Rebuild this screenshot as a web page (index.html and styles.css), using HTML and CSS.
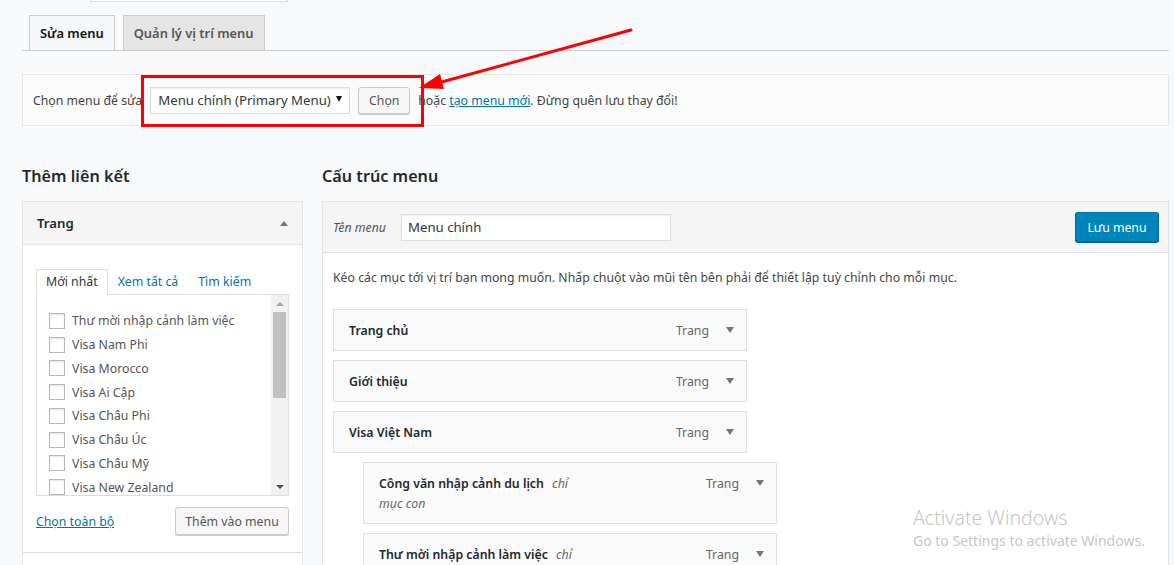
FILE: index.html
```html
<!DOCTYPE html>
<html lang="vi">
<head>
<meta charset="utf-8">
<title>Menu</title>
<link rel="stylesheet" href="styles.css">
</head>
<body>
<div class="wrap">
  <div class="top-field"></div>
  <nav class="nav-tabs">
    <a class="nav-tab active">Sửa menu</a>
    <a class="nav-tab">Quản lý vị trí menu</a>
  </nav>
  <div class="manage-menus">
    <span class="manage-label">Chọn menu để sửa</span>
    <div class="select"><span class="select-text">Menu chính (Primary Menu)</span><span class="caret"></span></div>
    <button class="btn btn-choose">Chọn</button>
    <span class="manage-after">hoặc <a class="link">tạo menu mới</a>. Đừng quên lưu thay đổi!</span>
  </div>
  <div class="columns">
    <section class="col-left">
      <h2 class="col-title">Thêm liên kết</h2>
      <div class="accordion">
        <div class="acc-head"><span>Trang</span><span class="tri-up"></span></div>
        <div class="acc-body">
          <div class="mini-tabs">
            <span class="mini-tab active">Mới nhất</span>
            <span class="mini-tab">Xem tất cả</span>
            <span class="mini-tab">Tìm kiếm</span>
          </div>
          <div class="list-box">
            <ul class="checklist">
              <li><span class="cb"></span>Thư mời nhập cảnh làm việc</li>
              <li><span class="cb"></span>Visa Nam Phi</li>
              <li><span class="cb"></span>Visa Morocco</li>
              <li><span class="cb"></span>Visa Ai Cập</li>
              <li><span class="cb"></span>Visa Châu Phi</li>
              <li><span class="cb"></span>Visa Châu Úc</li>
              <li><span class="cb"></span>Visa Châu Mỹ</li>
              <li><span class="cb"></span>Visa New Zealand</li>
            </ul>
            <div class="scrollbar">
              <span class="sb-btn"><span class="sb-up"></span></span>
              <span class="sb-thumb"></span>
              <span class="sb-btn sb-bottom"><span class="sb-down"></span></span>
            </div>
          </div>
          <div class="acc-actions">
            <a class="link">Chọn toàn bộ</a>
            <button class="btn btn-add">Thêm vào menu</button>
          </div>
        </div>
        <div class="acc-next"></div>
      </div>
    </section>
    <section class="col-right">
      <h2 class="col-title">Cấu trúc menu</h2>
      <div class="menu-edit">
        <div class="me-head">
          <span class="name-label">Tên menu</span>
          <div class="name-input">Menu chính</div>
          <button class="btn-primary">Lưu menu</button>
        </div>
        <div class="me-body">
          <p class="desc">Kéo các mục tới vị trí bạn mong muốn. Nhấp chuột vào mũi tên bên phải để thiết lập tuỳ chỉnh cho mỗi mục.</p>
          <ul class="menu-items">
            <li class="item"><span class="item-title">Trang chủ</span><span class="item-type">Trang</span><span class="item-arrow"><span class="tri-down"></span></span></li>
            <li class="item"><span class="item-title">Giới thiệu</span><span class="item-type">Trang</span><span class="item-arrow"><span class="tri-down"></span></span></li>
            <li class="item"><span class="item-title">Visa Việt Nam</span><span class="item-type">Trang</span><span class="item-arrow"><span class="tri-down"></span></span></li>
            <li class="item sub"><span class="item-title">Công văn nhập cảnh du lịch <em class="sub-note">chỉ</em><br><em class="sub-note first">mục con</em></span><span class="item-type">Trang</span><span class="item-arrow"><span class="tri-down"></span></span></li>
            <li class="item sub last"><span class="item-title">Thư mời nhập cảnh làm việc <em class="sub-note">chỉ</em></span><span class="item-type">Trang</span><span class="item-arrow"><span class="tri-down"></span></span></li>
          </ul>
        </div>
      </div>
    </section>
  </div>
</div>

<svg class="annotation" width="1174" height="565" viewBox="0 0 1174 565">
  <rect x="142.5" y="76.5" width="280" height="49" fill="none" stroke="#ff0000" stroke-width="3"/>
  <line x1="631" y1="30" x2="438" y2="83" stroke="#ff0000" stroke-width="3" stroke-linecap="round"/>
  <polygon points="419,88 444,89 440,74" fill="#ff0000"/>
</svg>

<div class="watermark">
  <div class="wm-title">Activate Windows</div>
  <div class="wm-sub">Go to Settings to activate Windows.</div>
</div>
</body>
</html>
```

FILE: styles.css
```css
* { box-sizing: border-box; }

html, body {
  margin: 0;
  height: 565px;
  overflow: hidden;
}

body {
  position: relative;
  background: #f8f9fa;
  font-family: "Noto Sans", "Open Sans", "Liberation Sans", sans-serif;
  font-size: 12.3px;
  color: #444;
}

.wrap {
  padding: 0 5px 0 22px;
}

.top-field {
  margin-left: 68px;
  width: 198px;
  height: 2px;
  border: 1px solid #ddd;
  border-top: 0;
  background: #fff;
}

/* top tabs */
.nav-tabs {
  display: flex;
  gap: 8px;
  margin-top: 13px;
  padding-left: 7px;
  border-bottom: 1px solid #ccc;
}

.nav-tab {
  border: 1px solid #ccc;
  border-bottom: 0;
  padding: 5px 10px;
  font-size: 12.9px;
  line-height: 24px;
  font-weight: 600;
  color: #555;
  background: #e5e5e5;
  white-space: nowrap;
}

.nav-tab.active {
  background: #f6f7f8;
  color: #111;
}

/* manage bar */
.manage-menus {
  margin-top: 23px;
  height: 52px;
  display: flex;
  align-items: center;
  padding: 0 10px;
  border: 1px solid #e5e5e5;
  background: #fbfbfb;
  color: #444;
  white-space: nowrap;
}

.select {
  margin-left: 8px;
  width: 200px;
  height: 27px;
  display: flex;
  align-items: center;
  justify-content: space-between;
  padding: 0 7px 0 7px;
  border: 1px solid #ddd;
  background: #fff;
  box-shadow: inset 0 1px 2px rgba(0,0,0,.07);
  font-size: 13.2px;
  color: #32373c;
}

.select-text {
  white-space: nowrap;
}

.caret {
  width: 0;
  height: 0;
  flex: none;
  border-left: 3.5px solid transparent;
  border-right: 3.5px solid transparent;
  border-top: 6px solid #111;
  margin-top: -3px;
}

.btn {
  font-family: inherit;
  font-size: 12.3px;
  color: #555;
  background: #f7f7f7;
  border: 1px solid #ccc;
  border-radius: 3px;
  box-shadow: 0 1px 0 #ccc;
  padding: 0 10px;
  height: 27px;
}

.btn-choose {
  margin-left: 8px;
  width: 52px;
  padding: 0;
}

.manage-after {
  margin-left: 8px;
}

.link {
  color: #0073aa;
  text-decoration: underline;
}

/* columns */
.columns {
  display: flex;
  gap: 19px;
  margin-top: 38px;
}

.col-left { width: 281px; flex: none; }
.col-right { flex: 1; }

.col-title {
  margin: 0 0 13px;
  font-size: 16.2px;
  line-height: 24px;
  font-weight: 600;
  color: #23282d;
}

/* accordion */
.accordion {
  border: 1px solid #e5e5e5;
  background: #fff;
}

.acc-head {
  height: 43px;
  display: flex;
  align-items: center;
  justify-content: space-between;
  padding: 0 14px 0 14px;
  background: #f5f5f5;
  border-bottom: 1px solid #e5e5e5;
  font-size: 13.2px;
  font-weight: 600;
  color: #23282d;
}

.tri-up {
  width: 0;
  height: 0;
  border-left: 4px solid transparent;
  border-right: 4px solid transparent;
  border-bottom: 5px solid #72777c;
}

.acc-body {
  padding: 24px 13px 17px 13px;
  border-bottom: 1px solid #ddd;
}

.mini-tabs {
  display: flex;
}

.mini-tab {
  padding: 0 9px;
  line-height: 24px;
  border: 1px solid transparent;
  border-bottom: 0;
  color: #0073aa;
}

.mini-tab.active {
  position: relative;
  z-index: 1;
  border-color: #ddd;
  border-bottom: 1px solid #fff;
  margin-bottom: -1px;
  background: #fff;
  color: #32373c;
}

.list-box {
  height: 202px;
  display: flex;
  border: 1px solid #ddd;
  background: #fff;
  overflow: hidden;
}

.checklist {
  flex: 1;
  margin: 0;
  padding: 14px 0 0 12px;
  list-style: none;
  color: #555;
}

.checklist li {
  height: 23.75px;
  display: flex;
  align-items: center;
  white-space: nowrap;
}

.cb {
  width: 16px;
  height: 16px;
  flex: none;
  margin-right: 7px;
  border: 1px solid #b4b9be;
  background: #fff;
  box-shadow: inset 0 1px 2px rgba(0,0,0,.1);
}

.scrollbar {
  width: 17px;
  flex: none;
  display: flex;
  flex-direction: column;
  background: #f1f1f1;
}

.sb-btn {
  height: 17px;
  display: flex;
  align-items: center;
  justify-content: center;
}

.sb-bottom { margin-top: auto; }

.sb-up {
  width: 0; height: 0;
  border-left: 4px solid transparent;
  border-right: 4px solid transparent;
  border-bottom: 4px solid #a3a3a3;
}

.sb-down {
  width: 0; height: 0;
  border-left: 4px solid transparent;
  border-right: 4px solid transparent;
  border-top: 4px solid #505050;
}

.sb-thumb {
  height: 86px;
  margin: 0 2px;
  background: #c1c1c1;
}

.acc-actions {
  margin-top: 11px;
  display: flex;
  align-items: center;
  justify-content: space-between;
}

.btn-add {
  height: 28px;
  width: 114px;
  padding: 0;
}

.acc-next {
  height: 20px;
  background: #fff;
}

/* menu editor */
.menu-edit {
  border: 1px solid #e5e5e5;
  border-bottom: 0;
  background: #fff;
}

.me-head {
  height: 51px;
  display: flex;
  align-items: center;
  padding: 0 9px 0 10px;
  background: #f5f5f5;
  border-bottom: 1px solid #dfdfdf;
}

.name-label {
  width: 68px;
  font-style: italic;
  color: #555;
}

.name-input {
  width: 270px;
  height: 27px;
  display: flex;
  align-items: center;
  padding: 0 6px;
  border: 1px solid #ddd;
  background: #fff;
  box-shadow: inset 0 1px 2px rgba(0,0,0,.07);
  font-size: 13.2px;
  color: #32373c;
}

.btn-primary {
  margin-left: auto;
  width: 84px;
  height: 30px;
  padding: 0;
  font-family: inherit;
  font-size: 12.3px;
  color: #fff;
  background: #0085ba;
  border: 1px solid;
  border-color: #0073aa #006799 #006799;
  border-radius: 3px;
  box-shadow: 0 1px 0 #006799;
}

.me-body {
  padding: 15px 10px 0 10px;
}

.desc {
  margin: 0 0 21px;
  line-height: 20px;
  color: #444;
}

.menu-items {
  margin: 0;
  padding: 0;
  list-style: none;
}

.item {
  width: 414px;
  margin-bottom: 9px;
  display: flex;
  align-items: flex-start;
  padding: 11px 12px 9px 15px;
  border: 1px solid #dfdfdf;
  background: #fafafa;
  line-height: 20px;
}

.item.sub {
  margin-left: 30px;
}

.item.last {
  height: 32px;
  margin-bottom: 0;
  border-bottom: 0;
}

.item-title {
  font-weight: 600;
  color: #23282d;
}

.sub-note {
  font-weight: 400;
  color: #666;
  margin-left: 5px;
}

.sub-note.first { margin-left: 0; }

.item-type {
  margin-left: auto;
  color: #666;
}

.item-arrow {
  height: 20px;
  margin-left: 17px;
  display: flex;
  align-items: center;
}

.tri-down {
  width: 0; height: 0;
  border-left: 4px solid transparent;
  border-right: 4px solid transparent;
  border-top: 6px solid #72777c;
  margin-top: -2px;
}

/* overlays */
.annotation {
  position: absolute;
  left: 0;
  top: 0;
  pointer-events: none;
}

.watermark {
  position: absolute;
  left: 913px;
  top: 505px;
  color: #c6c6c6;
  font-family: "Noto Sans", "Open Sans", sans-serif;
}

.wm-title {
  font-size: 19.5px;
  line-height: 26px;
  font-weight: 300;
}

.wm-sub {
  font-size: 14px;
  line-height: 20px;
}
```
